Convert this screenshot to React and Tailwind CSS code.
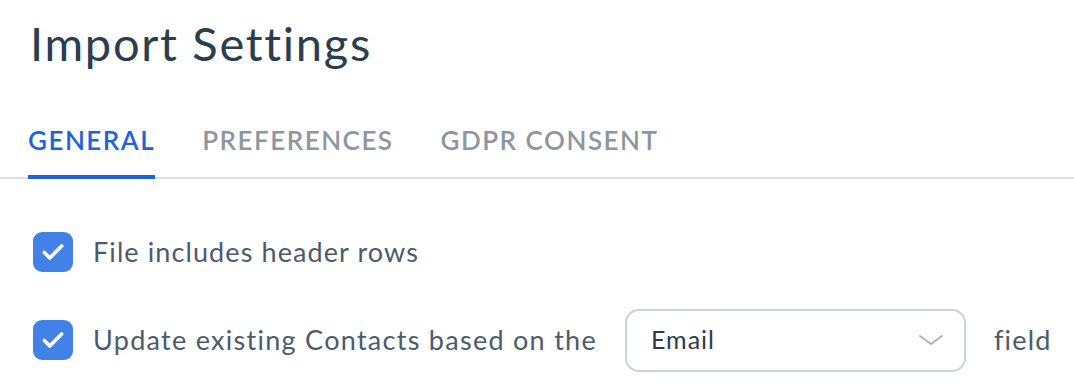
import React, { useState } from "react";

const Check = ({ checked, onClick }) => (
  <button
    onClick={onClick}
    className={`flex h-10 w-10 shrink-0 items-center justify-center rounded-[9px] ${checked ? "bg-[#4282e8]" : "border-2 border-gray-300 bg-white"}`}
  >
    {checked && (
      <svg width="26" height="26" viewBox="0 0 24 24" fill="none">
        <path d="M4 12.5l5 5L20 6.5" stroke="white" strokeWidth="3.4" strokeLinecap="round" strokeLinejoin="round" />
      </svg>
    )}
  </button>
);

const App = () => {
  const [tab, setTab] = useState("GENERAL");
  const [header, setHeader] = useState(true);
  const [update, setUpdate] = useState(true);
  const tabs = ["GENERAL", "PREFERENCES", "GDPR CONSENT"];

  return (
    <div className="h-[392px] w-[1074px] overflow-hidden bg-white font-['Lato',sans-serif]">
      <h1 className="pl-[30px] pt-[14px] text-[47px] leading-[58px] tracking-[1.7px] text-[#2b3d51]">Import Settings</h1>

      <div className="mt-[53px] flex gap-[47px] border-b-2 border-[#dcdfe3] pl-[28px]">
        {tabs.map((t) => (
          <button
            key={t}
            onClick={() => setTab(t)}
            className={`-mb-[2px] border-b-4 pb-[20px] text-[26px] font-semibold leading-[30px] tracking-[1.5px] ${tab === t ? "border-[#1d63e0] text-[#1d63e0]" : "border-transparent text-[#8d96a1]"}`}
          >
            {t}
          </button>
        ))}
      </div>

      <div className="flex flex-col gap-[36px] pl-[33px] pt-[53px]">
        <label className="flex items-center gap-[20px]">
          <Check checked={header} onClick={() => setHeader(!header)} />
          <span className="text-[27px] tracking-[1.1px] text-[#4c5b6b]">File includes header rows</span>
        </label>

        <div className="flex items-center">
          <Check checked={update} onClick={() => setUpdate(!update)} />
          <span className="ml-[20px] text-[27px] tracking-[1.28px] text-[#4c5b6b]">Update existing Contacts based on the</span>
          <div className="ml-[28px] flex h-[63px] w-[341px] items-center justify-between rounded-[14px] border-2 border-[#ced3d9] pl-[24px] pr-[20px]">
            <span className="text-[25px] tracking-[1px] text-[#2b3d51]">Email</span>
            <svg width="26" height="14" viewBox="0 0 26 14" fill="none">
              <path d="M2 3l11 8 11-8" stroke="#aab1ba" strokeWidth="1.8" strokeLinecap="round" strokeLinejoin="round" />
            </svg>
          </div>
          <span className="ml-[28px] text-[27px] tracking-[1.15px] text-[#4c5b6b]">field</span>
        </div>
      </div>
    </div>
  );
};

export default App;
